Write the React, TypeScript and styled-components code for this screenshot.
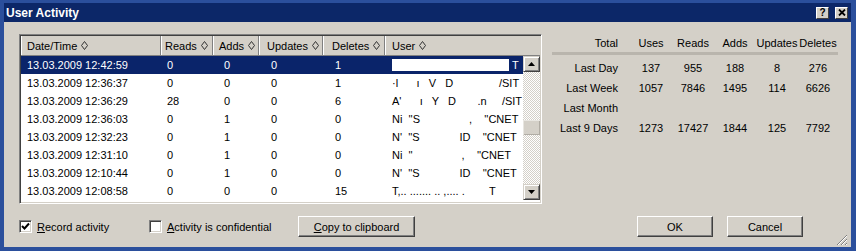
import React from "react";
import styled, { createGlobalStyle } from "styled-components";

const GlobalStyle = createGlobalStyle`
  html, body {
    margin: 0;
    padding: 0;
    background: #ffffff;
  }
  body {
    font-family: "Liberation Sans", Arial, sans-serif;
    font-size: 11px;
    color: #000;
  }
`;

const Frame = styled.div`
  width: 856px;
  height: 251px;
  box-sizing: border-box;
  background: #2b4f9c;
  padding: 3px 5px 4px 4px;
  display: flex;
  flex-direction: column;
`;

const TitleBar = styled.div`
  height: 19px;
  flex: none;
  background: #0c2768;
  display: flex;
  align-items: center;
  padding: 0 3px 0 2px;
`;

const TitleText = styled.span`
  flex: 1;
  color: #ffffff;
  font-weight: bold;
  font-size: 12px;
`;

const CaptionButton = styled.div`
  width: 13px;
  height: 12px;
  box-sizing: border-box;
  margin-left: 6px;
  background: #d4d0c8;
  border: 1px solid;
  border-color: #ffffff #404040 #404040 #ffffff;
  display: flex;
  align-items: center;
  justify-content: center;
  font-weight: bold;
  font-size: 10px;
  line-height: 10px;
`;

const Body = styled.div`
  position: relative;
  flex: 1;
  background: #d4d0c8;
  display: flex;
  flex-direction: column;
  padding: 12px 13px 0 15px;
`;

const TopArea = styled.div`
  display: flex;
  gap: 10px;
`;

const ListBox = styled.div`
  flex: none;
  width: 523px;
  height: 170px;
  box-sizing: border-box;
  background: #ffffff;
  border: 1px solid;
  border-color: #808080 #ffffff #ffffff #808080;
  box-shadow: inset 1px 1px 0 #404040, inset -1px -1px 0 #d4d0c8;
  padding: 1px;
  display: flex;
  flex-direction: column;
  overflow: hidden;
`;

const HeaderRow = styled.div<{ $cols: string }>`
  display: grid;
  grid-template-columns: ${(p) => p.$cols};
  height: 20px;
  flex: none;
  background: #d4d0c8;
`;

const HeaderCell = styled.div<{ $pad: number }>`
  display: flex;
  align-items: center;
  gap: 4px;
  padding-left: ${(p) => p.$pad}px;
  box-sizing: border-box;
  border-right: 1px solid #808080;
  border-bottom: 1px solid #808080;
  box-shadow: inset 1px 0 0 #ffffff;
  white-space: nowrap;
  overflow: hidden;
  &:last-child {
    border-right: none;
  }
`;

const ListArea = styled.div`
  display: flex;
  height: 144px;
`;

const Rows = styled.div`
  flex: 1;
  display: flex;
  flex-direction: column;
`;

const Row = styled.div<{ $cols: string; $selected?: boolean }>`
  display: grid;
  grid-template-columns: ${(p) => p.$cols};
  height: 18px;
  align-items: center;
  background: ${(p) => (p.$selected ? "#0a246a" : "#ffffff")};
  color: ${(p) => (p.$selected ? "#ffffff" : "#000000")};
`;

const Cell = styled.div<{ $pad: number }>`
  padding-left: ${(p) => p.$pad}px;
  white-space: pre;
  overflow: hidden;
  display: flex;
  align-items: center;
`;

const Redact = styled.span<{ $w: number }>`
  display: inline-block;
  width: ${(p) => p.$w}px;
  height: 12px;
  background: #ffffff;
  margin-right: 3px;
`;

const ScrollBar = styled.div`
  width: 17px;
  display: flex;
  flex-direction: column;
`;

const ScrollButton = styled.div`
  height: 16px;
  box-sizing: border-box;
  background: #d4d0c8;
  border: 1px solid;
  border-color: #d4d0c8 #404040 #404040 #d4d0c8;
  box-shadow: inset 1px 1px 0 #ffffff, inset -1px -1px 0 #808080;
  display: flex;
  align-items: center;
  justify-content: center;
`;

const Track = styled.div`
  flex: 1;
  display: flex;
  flex-direction: column;
  background-color: #ffffff;
  background-image: repeating-conic-gradient(#d4d0c8 0 25%, #ffffff 0 50%);
  background-size: 2px 2px;
`;

const Thumb = styled.div`
  margin-top: 48px;
  height: 15px;
  background: #d4d0c8;
  box-shadow: inset 1px 1px 0 #e8e6e1, inset -1px -1px 0 #b0aca4;
`;

const StatsGrid = styled.div`
  display: grid;
  grid-template-columns: 78px 42px 42px 42px 42px 40px;
  align-self: flex-start;
`;

const StatHead = styled.div<{ $label?: boolean }>`
  height: 18px;
  line-height: 18px;
  text-align: ${(p) => (p.$label ? "right" : "center")};
  padding-right: ${(p) => (p.$label ? 12 : 0)}px;
  white-space: nowrap;
`;

const StatRule = styled.div`
  grid-column: 1 / -1;
  height: 3px;
  background: #b9b5ad;
  margin-bottom: 3px;
`;

const StatCell = styled.div<{ $label?: boolean }>`
  height: 20px;
  line-height: 20px;
  text-align: ${(p) => (p.$label ? "right" : "center")};
  padding-right: ${(p) => (p.$label ? 12 : 0)}px;
  white-space: nowrap;
`;

const BottomBar = styled.div`
  display: flex;
  align-items: center;
  height: 21px;
  margin-top: 12px;
  padding-right: 35px;
`;

const CheckItem = styled.label<{ $w: number }>`
  width: ${(p) => p.$w}px;
  display: flex;
  align-items: center;
  gap: 5px;
  white-space: nowrap;
`;

const CheckBox = styled.span`
  width: 13px;
  height: 13px;
  box-sizing: border-box;
  background: #ffffff;
  border: 1px solid;
  border-color: #808080 #ffffff #ffffff #808080;
  box-shadow: inset 1px 1px 0 #404040, inset -1px -1px 0 #d4d0c8;
  display: flex;
  align-items: center;
  justify-content: center;
`;

const Spacer = styled.div`
  flex: 1;
`;

const PushButton = styled.div<{ $w: number }>`
  width: ${(p) => p.$w}px;
  height: 21px;
  box-sizing: border-box;
  background: #d4d0c8;
  border: 1px solid;
  border-color: #ffffff #404040 #404040 #ffffff;
  box-shadow: inset -1px -1px 0 #808080;
  display: flex;
  align-items: center;
  justify-content: center;
  white-space: nowrap;
  & + & {
    margin-left: 14px;
  }
`;

const Grip = styled.svg`
  position: absolute;
  right: 3px;
  bottom: 1px;
`;

const columns = [
  { label: "Date/Time", w: 140, hp: 6, dp: 6 },
  { label: "Reads", w: 52, hp: 4, dp: 6 },
  { label: "Adds", w: 46, hp: 6, dp: 11 },
  { label: "Updates", w: 64, hp: 8, dp: 12 },
  { label: "Deletes", w: 62, hp: 9, dp: 12 },
  { label: "User", w: 155, hp: 7, dp: 7 },
];

const headCols = columns.map((c) => c.w + "px").join(" ");
const rowCols = columns
  .map((c, i) => (i === columns.length - 1 ? c.w - 17 : c.w) + "px")
  .join(" ");

type Activity = {
  date: string;
  reads: string;
  adds: string;
  updates: string;
  deletes: string;
  user: string;
  hidden?: number;
};

// user names are blurred out in the source, only scraps of them remain
const activity: Activity[] = [
  { date: "13.03.2009 12:42:59", reads: "0", adds: "0", updates: "0", deletes: "1", user: "T", hidden: 117 },
  { date: "13.03.2009 12:36:37", reads: "0", adds: "0", updates: "0", deletes: "1", user: "·l      ı   V   D               /SIT" },
  { date: "13.03.2009 12:36:29", reads: "28", adds: "0", updates: "0", deletes: "6", user: "A'      ı   Y   D       .n     /SIT" },
  { date: "13.03.2009 12:36:03", reads: "0", adds: "1", updates: "0", deletes: "0", user: "Ni  ''S                ,    ''CNET" },
  { date: "13.03.2009 12:32:23", reads: "0", adds: "1", updates: "0", deletes: "0", user: "N'  ''S             ID    ''CNET" },
  { date: "13.03.2009 12:31:10", reads: "0", adds: "1", updates: "0", deletes: "0", user: "Ni  ''                ,    ''CNET" },
  { date: "13.03.2009 12:10:44", reads: "0", adds: "1", updates: "0", deletes: "0", user: "N'  ''S             ID    ''CNET" },
  { date: "13.03.2009 12:08:58", reads: "0", adds: "0", updates: "0", deletes: "15", user: "T,.. ....... .. ,.... .        T" },
];

const stats = [
  { label: "Last Day", values: ["137", "955", "188", "8", "276"] },
  { label: "Last Week", values: ["1057", "7846", "1495", "114", "6626"] },
  { label: "Last Month", values: ["", "", "", "", ""] },
  { label: "Last 9 Days", values: ["1273", "17427", "1844", "125", "7792"] },
];

const SortIcon = () => (
  <svg width="7" height="9" viewBox="0 0 7 9">
    <polygon points="3.5,0.5 6.5,4.5 3.5,8.5 0.5,4.5" fill="none" stroke="#333" strokeWidth="1" />
  </svg>
);

const ArrowIcon = ({ down }: { down?: boolean }) => (
  <svg width="7" height="4" viewBox="0 0 7 4">
    <polygon points={down ? "0,0 7,0 3.5,4" : "0,4 7,4 3.5,0"} fill="#000" />
  </svg>
);

const CheckMark = () => (
  <svg width="9" height="9" viewBox="0 0 9 9">
    <polyline points="1,4 3.5,6.5 8,1.5" fill="none" stroke="#000" strokeWidth="2" />
  </svg>
);

export default function App() {
  return (
    <>
      <GlobalStyle />
      <Frame>
        <TitleBar>
          <TitleText>User Activity</TitleText>
          <CaptionButton>?</CaptionButton>
          <CaptionButton>
            <svg width="8" height="7" viewBox="0 0 8 7">
              <path d="M1 0.5 L7 6.5 M7 0.5 L1 6.5" stroke="#000" strokeWidth="1.8" />
            </svg>
          </CaptionButton>
        </TitleBar>
        <Body>
          <TopArea>
            <ListBox>
              <HeaderRow $cols={headCols}>
                {columns.map((c) => (
                  <HeaderCell key={c.label} $pad={c.hp}>
                    {c.label}
                    <SortIcon />
                  </HeaderCell>
                ))}
              </HeaderRow>
              <ListArea>
                <Rows>
                  {activity.map((a, i) => (
                    <Row key={a.date} $cols={rowCols} $selected={i === 0}>
                      <Cell $pad={columns[0].dp}>{a.date}</Cell>
                      <Cell $pad={columns[1].dp}>{a.reads}</Cell>
                      <Cell $pad={columns[2].dp}>{a.adds}</Cell>
                      <Cell $pad={columns[3].dp}>{a.updates}</Cell>
                      <Cell $pad={columns[4].dp}>{a.deletes}</Cell>
                      <Cell $pad={columns[5].dp}>
                        {a.hidden ? <Redact $w={a.hidden} /> : null}
                        {a.user}
                      </Cell>
                    </Row>
                  ))}
                </Rows>
                <ScrollBar>
                  <ScrollButton>
                    <ArrowIcon />
                  </ScrollButton>
                  <Track>
                    <Thumb />
                  </Track>
                  <ScrollButton>
                    <ArrowIcon down />
                  </ScrollButton>
                </ScrollBar>
              </ListArea>
            </ListBox>
            <StatsGrid>
              <StatHead $label>Total</StatHead>
              <StatHead>Uses</StatHead>
              <StatHead>Reads</StatHead>
              <StatHead>Adds</StatHead>
              <StatHead>Updates</StatHead>
              <StatHead>Deletes</StatHead>
              <StatRule />
              {stats.map((s) => (
                <React.Fragment key={s.label}>
                  <StatCell $label>{s.label}</StatCell>
                  {s.values.map((v, j) => (
                    <StatCell key={j}>{v}</StatCell>
                  ))}
                </React.Fragment>
              ))}
            </StatsGrid>
          </TopArea>
          <BottomBar>
            <CheckItem $w={130}>
              <CheckBox>
                <CheckMark />
              </CheckBox>
              <span>
                <u>R</u>ecord activity
              </span>
            </CheckItem>
            <CheckItem $w={149}>
              <CheckBox />
              <span>
                <u>A</u>ctivity is confidential
              </span>
            </CheckItem>
            <PushButton $w={117}>
              <span>
                <u>C</u>opy to clipboard
              </span>
            </PushButton>
            <Spacer />
            <PushButton $w={76}>OK</PushButton>
            <PushButton $w={76}>Cancel</PushButton>
          </BottomBar>
          <Grip width="12" height="12" viewBox="0 0 12 12">
            <path d="M11 1 L1 11 M11 5 L5 11 M11 9 L9 11" stroke="#808080" strokeWidth="1" />
            <path d="M11 2 L2 11 M11 6 L6 11 M11 10 L10 11" stroke="#ffffff" strokeWidth="1" />
          </Grip>
        </Body>
      </Frame>
    </>
  );
}
